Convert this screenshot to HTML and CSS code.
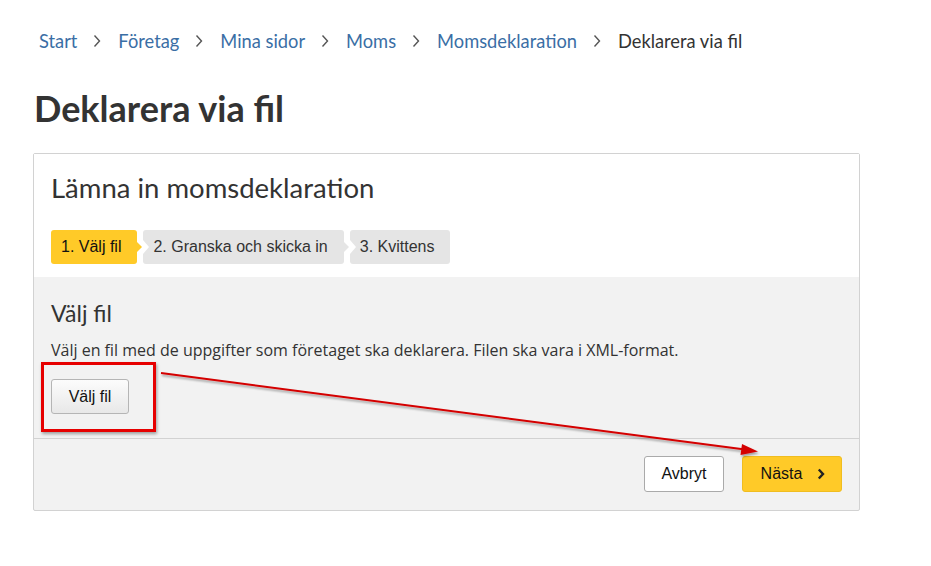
FILE: index.html
```html
<!DOCTYPE html>
<html lang="sv">
<head>
<meta charset="utf-8">
<title>Deklarera via fil</title>
<link rel="stylesheet" href="styles.css">
</head>
<body>
<div class="page">
  <nav class="crumbs">
    <a href="#">Start</a>
    <svg class="sep" width="8" height="14" viewBox="0 0 8 14"><path d="M1.5 1.5 L6.5 7 L1.5 12.5" fill="none" stroke="#555" stroke-width="1.4"/></svg>
    <a href="#">Företag</a>
    <svg class="sep" width="8" height="14" viewBox="0 0 8 14"><path d="M1.5 1.5 L6.5 7 L1.5 12.5" fill="none" stroke="#555" stroke-width="1.4"/></svg>
    <a href="#">Mina sidor</a>
    <svg class="sep" width="8" height="14" viewBox="0 0 8 14"><path d="M1.5 1.5 L6.5 7 L1.5 12.5" fill="none" stroke="#555" stroke-width="1.4"/></svg>
    <a href="#">Moms</a>
    <svg class="sep" width="8" height="14" viewBox="0 0 8 14"><path d="M1.5 1.5 L6.5 7 L1.5 12.5" fill="none" stroke="#555" stroke-width="1.4"/></svg>
    <a href="#">Momsdeklaration</a>
    <svg class="sep" width="8" height="14" viewBox="0 0 8 14"><path d="M1.5 1.5 L6.5 7 L1.5 12.5" fill="none" stroke="#555" stroke-width="1.4"/></svg>
    <span class="current">Deklarera via fil</span>
  </nav>

  <h1 class="title">Deklarera via fil</h1>

  <section class="card">
    <div class="card-head">
      <h2 class="card-title">Lämna in momsdeklaration</h2>
      <ol class="steps">
        <li class="step active">1. Välj fil</li>
        <li class="step">2. Granska och skicka in</li>
        <li class="step">3. Kvittens</li>
      </ol>
    </div>
    <div class="card-body">
      <h3 class="sub-title">Välj fil</h3>
      <p class="desc">Välj en fil med de uppgifter som företaget ska deklarera. Filen ska vara i XML-format.</p>
      <button class="btn-file">Välj fil</button>
    </div>
    <div class="card-foot">
      <button class="btn btn-cancel">Avbryt</button>
      <button class="btn btn-next">Nästa
        <svg width="8" height="12" viewBox="0 0 8 12"><path d="M1.8 1.5 L6 6 L1.8 10.5" fill="none" stroke="#222" stroke-width="2.4"/></svg>
      </button>
    </div>
  </section>
</div>

<div class="annot-box"></div>
<svg class="annot-arrow" width="931" height="566" viewBox="0 0 931 566">
  <defs>
    <filter id="sh" x="-5%" y="-50%" width="110%" height="200%">
      <feDropShadow dx="1" dy="2" stdDeviation="1.2" flood-color="#000" flood-opacity="0.35"/>
    </filter>
  </defs>
  <g filter="url(#sh)">
    <line x1="161" y1="373" x2="745" y2="449.5" stroke="#d40000" stroke-width="2"/>
    <path d="M758 451.5 L742 444 L740.5 455 Z" fill="#d40000"/>
  </g>
</svg>
</body>
</html>
```

FILE: styles.css
```css
html, body {
  margin: 0;
  padding: 0;
  background: #fff;
}
body {
  font-family: "Open Sans", "Liberation Sans", sans-serif;
  color: #333;
  width: 931px;
  height: 566px;
  overflow: hidden;
  position: relative;
}
.page {
  padding: 29px 0 0 33px;
}
.crumbs {
  display: flex;
  align-items: center;
  padding-left: 6px;
  font-family: Lato, "Open Sans", sans-serif;
  font-size: 18.3px;
  line-height: 24px;
  height: 24px;
}
.crumbs a {
  color: #3a6ea5;
  text-decoration: none;
}
.crumbs .sep {
  margin: 0 17px 0 16px;
  flex: none;
}
.crumbs .current {
  color: #333;
}
.title {
  margin: 33px 0 0 1px;
  font-family: Lato, sans-serif;
  font-weight: 700;
  font-size: 36px;
  line-height: 44px;
  color: #333;
}
.card {
  margin-top: 23px;
  width: 825px;
  border: 1px solid #d2d2d2;
  border-radius: 2px;
  background: #f2f2f2;
}
.card-head {
  background: #fff;
  padding: 18px 17px 13px;
}
.card-title {
  margin: 0;
  font-family: Lato, sans-serif;
  font-weight: 400;
  font-size: 27.5px;
  line-height: 32px;
  color: #333;
}
.steps {
  list-style: none;
  margin: 26px 0 0;
  padding: 0;
  display: flex;
  gap: 6px;
}
.step {
  position: relative;
  height: 34px;
  line-height: 33px;
  padding: 0 16px 0 10px;
  background: #e5e5e5;
  border-radius: 3px;
  font-family: "Liberation Sans", Arial, sans-serif;
  font-size: 16px;
  color: #333;
}
.step.active {
  background: #ffca28;
  color: #111;
}
.step:not(:last-child)::after {
  content: "";
  position: absolute;
  right: -5px;
  top: 12px;
  border-top: 5px solid transparent;
  border-bottom: 5px solid transparent;
  border-left: 5px solid #e5e5e5;
}
.step.active::after {
  border-left-color: #ffca28;
}
.step:not(:first-child)::before {
  content: "";
  position: absolute;
  left: 0;
  top: 10px;
  border-top: 7px solid transparent;
  border-bottom: 7px solid transparent;
  border-left: 6px solid #fff;
}
.card-body {
  padding: 22px 17px 24px;
}
.sub-title {
  margin: 0;
  font-family: Lato, sans-serif;
  font-weight: 400;
  font-size: 23px;
  line-height: 28px;
  color: #333;
}
.desc {
  margin: 12px 0 0;
  font-size: 16px;
  line-height: 22px;
  color: #333;
}
.btn-file {
  margin-top: 18px;
  display: block;
  width: 78px;
  height: 35px;
  padding: 0;
  border: 1px solid #b5b5b5;
  border-radius: 3px;
  background: linear-gradient(#fcfcfc, #e8e8e8);
  font-family: "Liberation Sans", Arial, sans-serif;
  font-size: 16px;
  color: #111;
}
.card-foot {
  border-top: 1px solid #d2d2d2;
  padding: 17px 17px 18px;
  display: flex;
  justify-content: flex-end;
  gap: 18px;
}
.btn {
  height: 36px;
  border-radius: 3px;
  font-family: "Liberation Sans", Arial, sans-serif;
  font-size: 16px;
  color: #111;
  padding: 0;
  display: flex;
  align-items: center;
  justify-content: center;
}
.btn-cancel {
  width: 80px;
  background: #fff;
  border: 1px solid #aaa;
}
.btn-next {
  width: 100px;
  background: #ffca28;
  border: 1px solid #f0bd20;
  gap: 15px;
  padding-left: 2px;
}
.annot-box {
  position: absolute;
  left: 41px;
  top: 362px;
  width: 109px;
  height: 64px;
  border: 3px solid #e60000;
  box-shadow: 1px 2px 3px rgba(0,0,0,0.35);
}
.annot-arrow {
  position: absolute;
  left: 0;
  top: 0;
  pointer-events: none;
}
```
